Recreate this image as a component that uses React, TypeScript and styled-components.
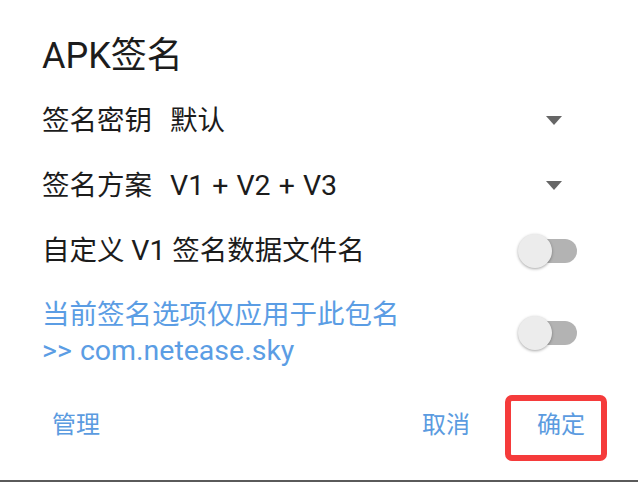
import styled, { createGlobalStyle } from 'styled-components'

const GlobalStyle = createGlobalStyle`
  html, body {
    margin: 0;
    padding: 0;
    background: #ffffff;
  }
  body {
    font-family: Roboto, "Noto Sans CJK SC", sans-serif;
  }
`

const Dialog = styled.div`
  width: 638px;
  height: 482px;
  box-sizing: border-box;
  display: flex;
  flex-direction: column;
  background: #ffffff;
  border-bottom: 2px solid #5a5a5a;
`

const Title = styled.h1`
  margin: 0;
  padding: 36px 0 0 42px;
  height: 52px;
  font-size: 36px;
  line-height: 40px;
  font-weight: 400;
  color: #1c1c1c;
`

const Row = styled.div<{ $tall?: boolean }>`
  display: flex;
  align-items: center;
  justify-content: space-between;
  height: ${(p) => (p.$tall ? '86px' : '65px')};
  padding: ${(p) => (p.$tall ? '14px 61px 0 42px' : '0 61px 0 42px')};
  box-sizing: border-box;
  flex-shrink: 0;
`

const Label = styled.div<{ $accent?: boolean }>`
  font-size: 27.5px;
  line-height: 36px;
  color: ${(p) => (p.$accent ? '#5b9de4' : '#1c1c1c')};
  white-space: nowrap;
`

const Value = styled.span`
  margin-left: 18px;
`

// latin runs read a touch wider than Roboto in the original
const Latin = styled.span`
  font-size: 28.5px;
  word-spacing: 1px;
`

const Arrow = styled.span`
  width: 0;
  height: 0;
  margin-right: 15px;
  border-left: 8.5px solid transparent;
  border-right: 8.5px solid transparent;
  border-top: 9px solid #666666;
`

const Switch = styled.span`
  position: relative;
  width: 60px;
  height: 36px;
  flex-shrink: 0;
`

const Track = styled.span`
  position: absolute;
  left: 13px;
  top: 6px;
  width: 47px;
  height: 24px;
  border-radius: 12px;
  background: #b3b3b3;
`

const Thumb = styled.span`
  position: absolute;
  left: 1px;
  top: 1px;
  width: 34px;
  height: 34px;
  border-radius: 50%;
  background: #ececec;
  box-shadow: 0 1px 3px rgba(0, 0, 0, 0.35);
`

const Footer = styled.div`
  flex: 1;
  display: flex;
  align-items: center;
  padding: 0 31px 0 42px;
`

const TextButton = styled.button`
  border: none;
  background: none;
  padding: 0 10px;
  font-family: inherit;
  font-size: 24px;
  line-height: 24px;
  color: #5b9be0;
  cursor: pointer;
`

const Spacer = styled.div`
  flex: 1;
`

const Highlight = styled.div`
  margin: 6px 0 0 25px;
  height: 66px;
  box-sizing: border-box;
  border: 6px solid #f53b3b;
  border-radius: 7px;
  padding: 12px 6px 18px 16px;
  display: flex;
  align-items: center;
`

const Toggle = () => (
  <Switch>
    <Track />
    <Thumb />
  </Switch>
)

export default function App() {
  return (
    <>
      <GlobalStyle />
      <Dialog>
        <Title>APK签名</Title>

        <Row>
          <Label>
            签名密钥<Value>默认</Value>
          </Label>
          <Arrow />
        </Row>

        <Row>
          <Label>
            签名方案
            <Value>
              <Latin>V1 + V2 + V3</Latin>
            </Value>
          </Label>
          <Arrow />
        </Row>

        <Row>
          <Label>
            自定义 <Latin>V1</Latin> 签名数据文件名
          </Label>
          <Toggle />
        </Row>

        <Row $tall>
          <Label $accent>
            当前签名选项仅应用于此包名
            <br />
            <Latin>&gt;&gt; com.netease.sky</Latin>
          </Label>
          <Toggle />
        </Row>

        <Footer>
          <TextButton>管理</TextButton>
          <Spacer />
          <TextButton>取消</TextButton>
          <Highlight>
            <TextButton>确定</TextButton>
          </Highlight>
        </Footer>
      </Dialog>
    </>
  )
}
